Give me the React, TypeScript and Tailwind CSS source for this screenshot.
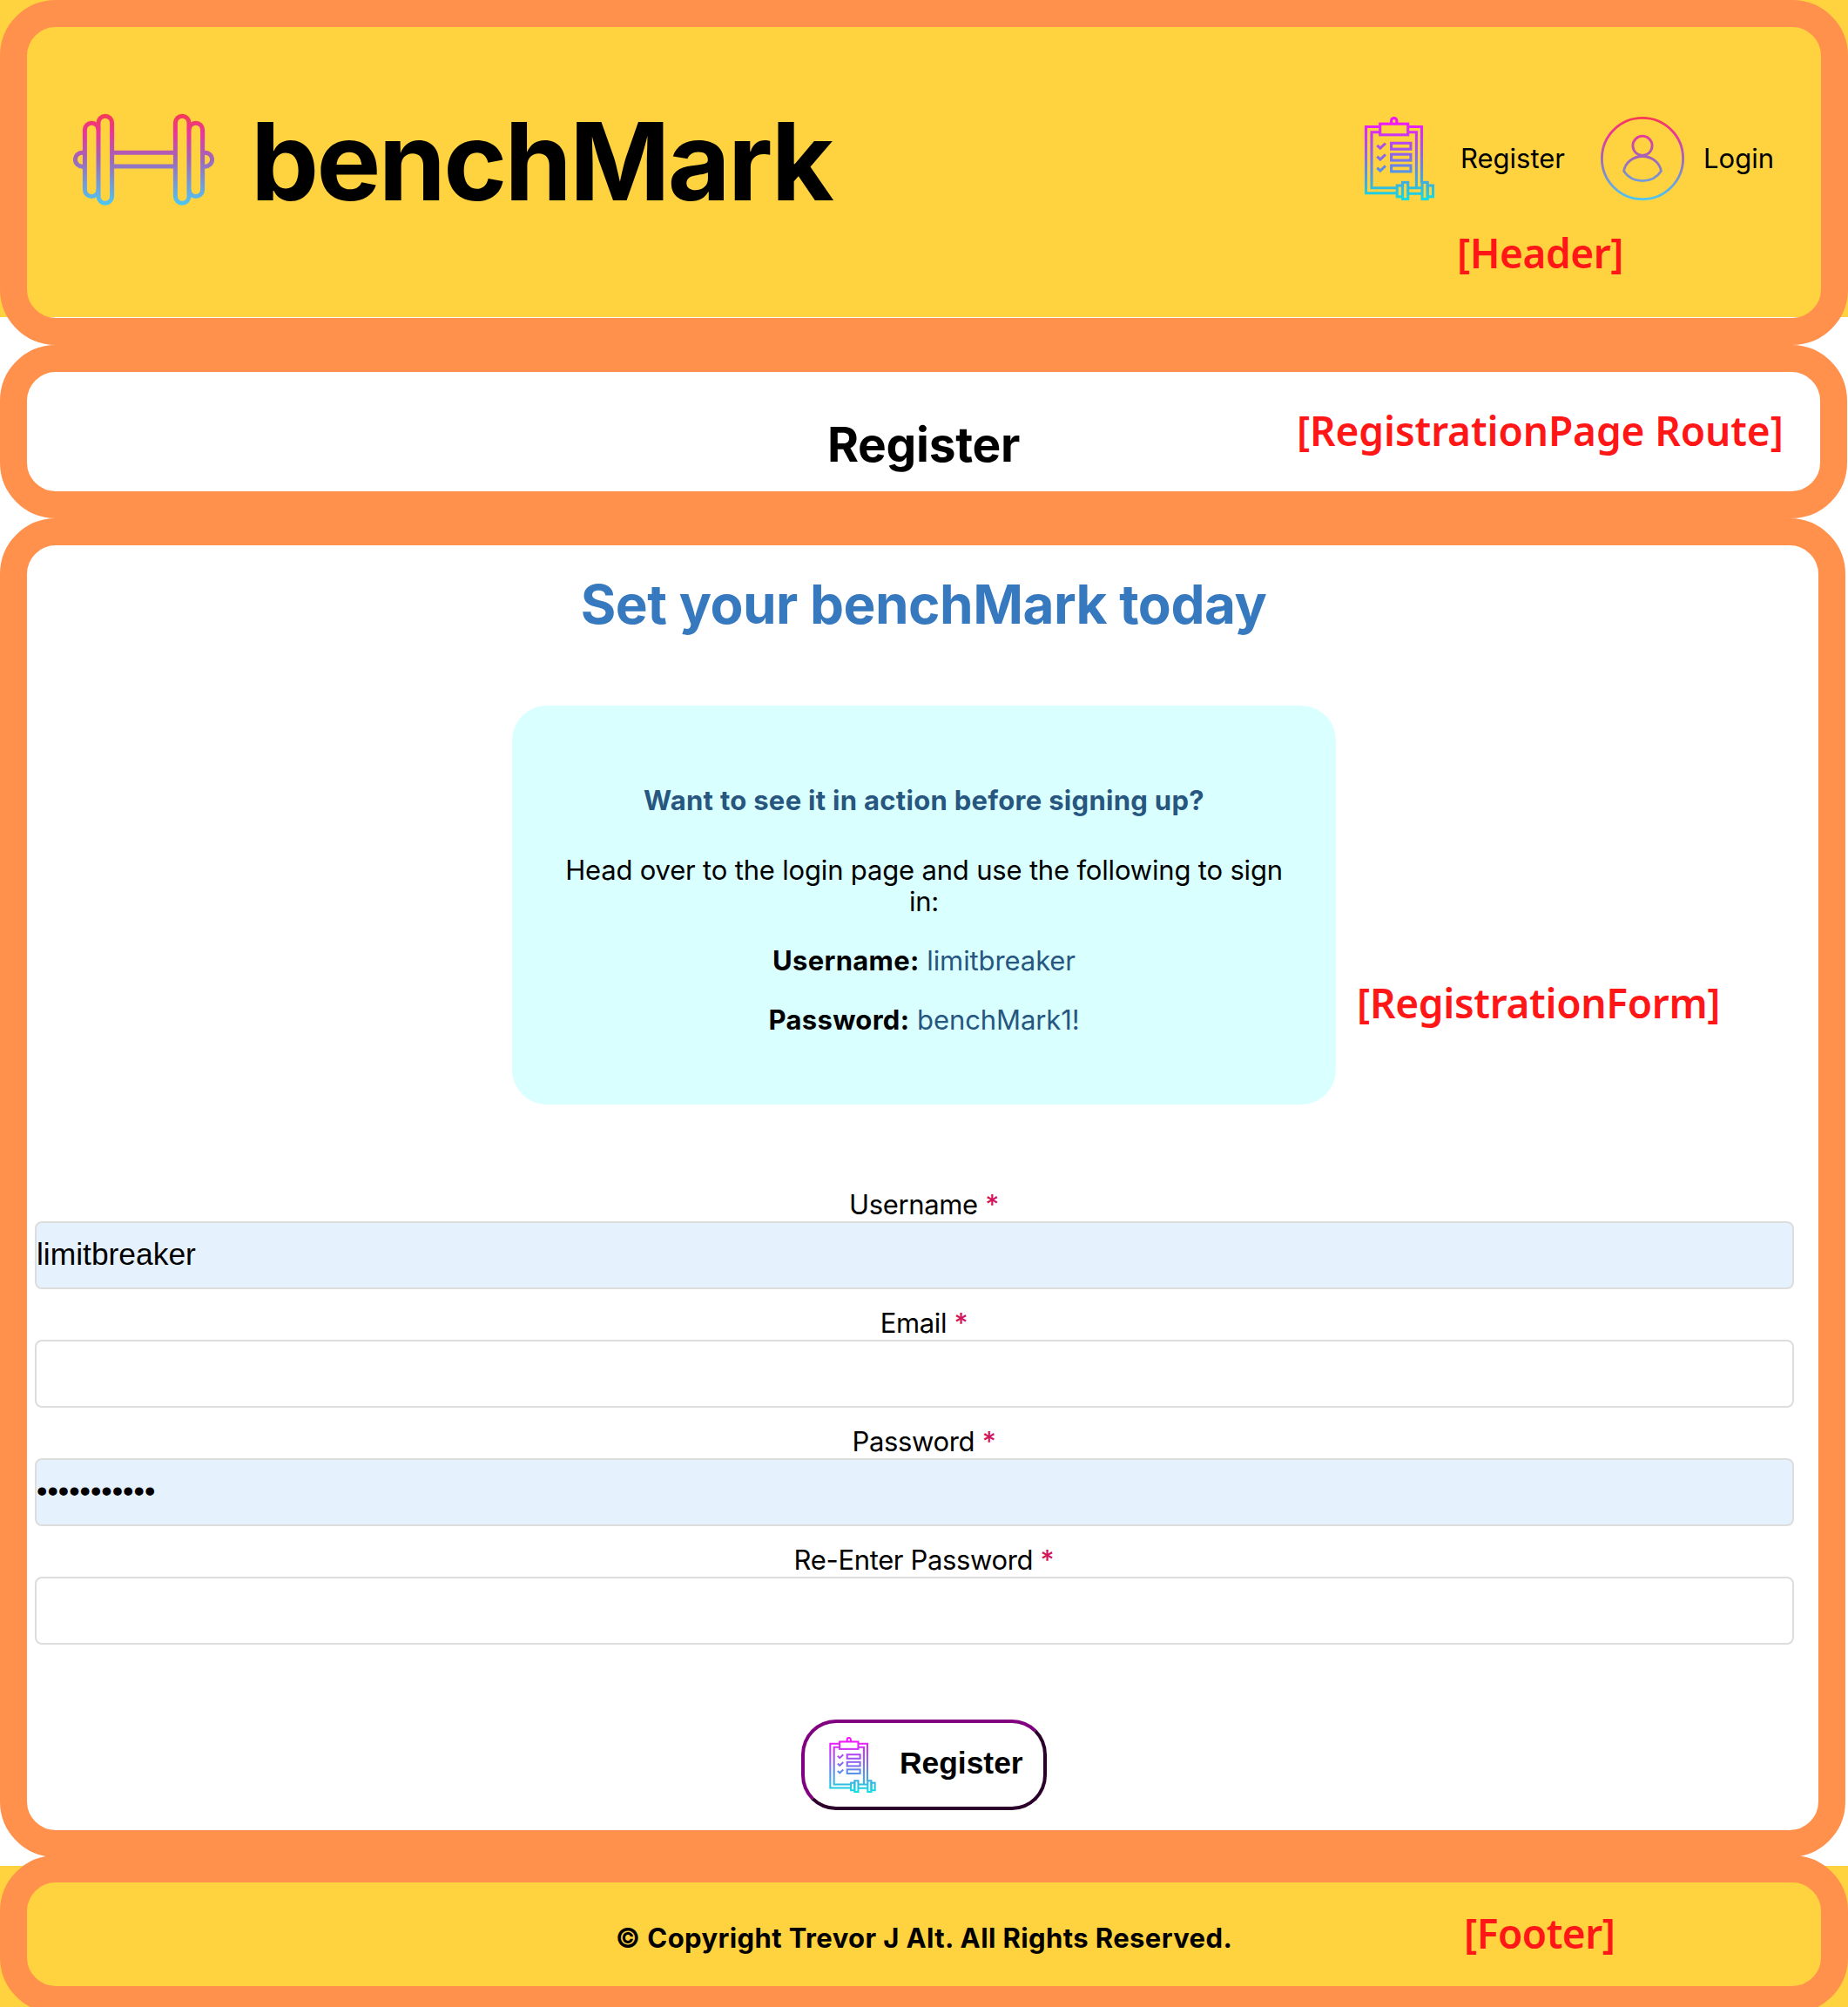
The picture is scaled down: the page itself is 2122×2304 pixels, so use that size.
import type { ReactNode } from "react";

function WarmStops() {
  return (
    <>
      <stop offset="0" stopColor="#f73a50" />
      <stop offset="0.22" stopColor="#e8369f" />
      <stop offset="0.5" stopColor="#9f67ba" />
      <stop offset="1" stopColor="#4cc9f4" />
    </>
  );
}

function DumbbellLogo() {
  return (
    <svg viewBox="84 130 162 106" className="h-[106px] w-[162px] shrink-0" fill="none" stroke="url(#logo-gradient)" strokeWidth="5">
      <defs>
        <linearGradient id="logo-gradient" gradientUnits="userSpaceOnUse" x1="0" y1="130" x2="0" y2="236">
          <WarmStops />
        </linearGradient>
      </defs>
      <rect x="113" y="133.2" width="15.6" height="100" rx="7.8" />
      <rect x="201.4" y="133.2" width="15.6" height="100" rx="7.8" />
      <path d="M113 149a7.8 7.8 0 0 0-15.6 0v68.7a7.8 7.8 0 0 0 15.6 0" />
      <path d="M217 149a7.8 7.8 0 0 1 15.6 0v68.7a7.8 7.8 0 0 1-15.6 0" />
      <path d="M130 175.3h70M130 191.1h70" />
      <path d="M97 175.2h-2.6a8 8 0 0 0 0 16H97M233 175.2h2.6a8 8 0 0 1 0 16H233" />
    </svg>
  );
}

function ClipboardIcon({ id, className }: { id: string; className: string }) {
  return (
    <svg viewBox="0 0 96 96" className={className} fill="none" stroke={`url(#${id})`} strokeWidth="3.1">
      <defs>
        <linearGradient id={id} gradientUnits="userSpaceOnUse" x1="0" y1="0" x2="0" y2="96">
          <stop offset="0.05" stopColor="#f714fb" />
          <stop offset="0.4" stopColor="#9d58ee" />
          <stop offset="0.62" stopColor="#5f8bea" />
          <stop offset="0.85" stopColor="#2fbde0" />
          <stop offset="1" stopColor="#0ce0e4" />
        </linearGradient>
      </defs>
      <path d="M25.7 11.5H9.5v76.3H45M57.7 11.5h15.8V76" />
      <path d="M25.7 17.7H16v64h29M57.7 17.7h9.7v64" />
      <rect x="25.7" y="8.2" width="32" height="12.6" />
      <path d="M38.6 8V4.6a3.1 3.1 0 0 1 6.2 0V8" />
      <path d="M22.3 32.8l3.6 3.4 6-5.7M22.3 45.7l3.6 3.4 6-5.7M22.3 58.6l3.6 3.4 6-5.7" />
      <rect x="38.6" y="30.3" width="22.3" height="6.9" />
      <rect x="38.6" y="43.2" width="22.3" height="6.9" />
      <rect x="38.6" y="56" width="22.3" height="6.9" />
      <rect x="45.2" y="79" width="6.3" height="12.8" />
      <rect x="51.5" y="75.4" width="6.2" height="19.2" />
      <path d="M57.7 81.7H74M57.7 88.2H74" />
      <rect x="74" y="75.4" width="6.2" height="19.2" />
      <rect x="80.2" y="79" width="6.3" height="12.8" />
    </svg>
  );
}

function LoginIcon() {
  return (
    <svg viewBox="0 0 96 96" className="size-24" fill="none" stroke="url(#login-gradient)" strokeWidth="2.8">
      <defs>
        <linearGradient id="login-gradient" gradientUnits="userSpaceOnUse" x1="0" y1="0" x2="0" y2="96">
          <WarmStops />
        </linearGradient>
      </defs>
      <circle cx="48" cy="48" r="46.6" />
      <circle cx="48" cy="33.3" r="11.1" />
      <path d="M26.6 62.6C28 53 37 45.5 48 45.5S68 53 69.4 62.6C65 69.3 57 73.7 48 73.7S31 69.3 26.6 62.6Z" />
    </svg>
  );
}

function Annotation({ className, children }: { className: string; children: ReactNode }) {
  return (
    <span className={`absolute font-['Noto_Sans',sans-serif] text-[46px] leading-none font-semibold whitespace-nowrap text-[#ff1616] ${className}`}>
      {children}
    </span>
  );
}

function Field({ label, type = "text", value = "" }: { label: string; type?: string; value?: string }) {
  return (
    <div className="flex flex-col">
      <label className="mb-px pl-[22px] text-center text-[31px] leading-9 tracking-[-0.35px]">
        {label} <span className="font-medium text-[#d4145a]">*</span>
      </label>
      <input
        type={type}
        defaultValue={value}
        className={`h-[78px] w-full rounded-lg border-2 border-[#dddddd] pb-px font-['Liberation_Sans',sans-serif] text-[35.4px] outline-none ${value ? "bg-[#e6f1fe]" : "bg-white"}`}
      />
    </div>
  );
}

export default function App() {
  return (
    <div className="h-[2304px] w-[2122px] overflow-hidden bg-white font-['Inter',sans-serif] text-black">
      <div className="h-[396px] bg-[linear-gradient(#ffd23f_364px,white_364px)]">
        <header className="relative flex h-full items-start justify-between rounded-[64px] border-[31px] border-[#ff914d] pt-[99px] pr-[54px] pl-[53px]">
          <div className="flex h-[106px] items-center gap-[42px]">
            <DumbbellLogo />
            <h1 className="pt-1 text-[124px] leading-[106px] font-bold tracking-[-2.7px]">benchMark</h1>
          </div>
          <nav className="flex h-[104px] items-center gap-[41px] text-[31px] leading-9">
            <a className="flex items-center gap-[22px]">
              <ClipboardIcon id="nav-clipboard" className="size-24" />
              Register
            </a>
            <a className="flex items-center gap-[22px]">
              <LoginIcon />
              Login
            </a>
          </nav>
          <Annotation className="top-[236px] left-[1642px] tracking-[-0.45px]">[Header]</Annotation>
        </header>
      </div>

      <section className="relative flex h-[199px] w-[2121px] items-center justify-center rounded-[64px] border-[31px] border-[#ff914d] pt-[29px]">
        <h2 className="text-[55px] leading-none font-bold tracking-[-0.3px]">Register</h2>
        <Annotation className="top-[44px] left-[1458px] tracking-[-0.1px]">[RegistrationPage Route]</Annotation>
      </section>

      <main className="relative flex h-[1537px] w-[2119px] flex-col items-center rounded-[64px] border-[31px] border-[#ff914d] pt-[37px]">
        <h2 className="ml-0.5 text-[62px] leading-[62px] font-bold tracking-[-0.5px] text-[#3779bf]">Set your benchMark today</h2>

        <div className="mt-[85px] ml-[3px] flex h-[458px] w-[946px] flex-col items-center rounded-[40px] bg-[#d9ffff] px-14 pt-[91px] text-center text-[31px] leading-9">
          <h3 className="font-bold tracking-[0.3px] text-[#27567f]">Want to see it in action before signing up?</h3>
          <p className="mt-11 tracking-[-0.18px]">Head over to the login page and use the following to sign in:</p>
          <p className="mt-8">
            <b className="tracking-[0.3px]">Username:</b> <span className="tracking-[-0.1px] text-[#27567f]">limitbreaker</span>
          </p>
          <p className="mt-8">
            <b className="tracking-[0.3px]">Password:</b> <span className="tracking-[-0.1px] text-[#27567f]">benchMark1!</span>
          </p>
        </div>

        <form className="mt-[97px] flex w-full flex-col items-center">
          <div className="flex w-full flex-col gap-[21px] pr-[28px] pl-[9px]">
            <Field label="Username" value="limitbreaker" />
            <Field label="Email" />
            <Field label="Password" type="password" value="benchMark1!" />
            <Field label="Re-Enter Password" />
          </div>
          <button
            type="button"
            className="mt-[86px] ml-[3px] flex h-[104px] w-[282px] items-center gap-[22px] rounded-[40px] border-4 border-t-[#800080] border-r-[#2b002b] border-b-[#2b002b] border-l-[#800080] bg-white pl-[23px] font-['Liberation_Sans',sans-serif] text-[35.4px] leading-10 font-bold"
          >
            <ClipboardIcon id="button-clipboard" className="size-16" />
            <span className="pb-1">Register</span>
          </button>
        </form>
        <Annotation className="top-[502px] left-[1527px] tracking-[-0.3px]">[RegistrationForm]</Annotation>
      </main>

      <div className="-mt-0.5 bg-[linear-gradient(transparent_12px,#ffd23f_12px)]">
        <footer className="relative flex h-[181px] items-center justify-center rounded-[64px] border-[31px] border-[#ff914d] pt-[8px]">
          <p className="text-[31px] leading-9 font-bold tracking-[0.4px]">© Copyright Trevor J Alt. All Rights Reserved.</p>
          <Annotation className="top-[35px] left-[1650px] tracking-[-0.5px]">[Footer]</Annotation>
        </footer>
      </div>
    </div>
  );
}
